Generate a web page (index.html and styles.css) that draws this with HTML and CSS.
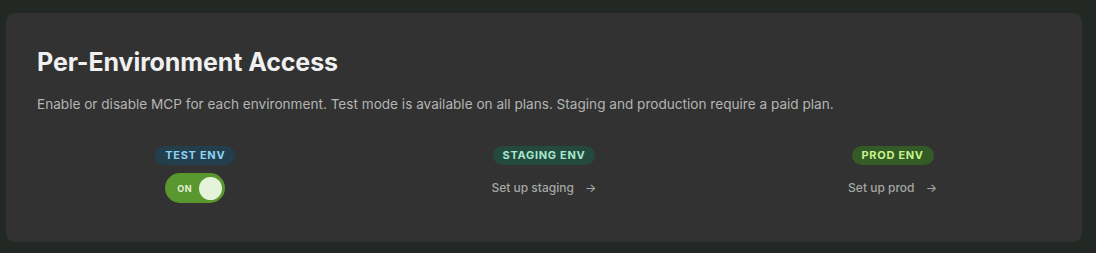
FILE: index.html
```html
<!DOCTYPE html>
<html lang="en">
<head>
    <meta charset="UTF-8">
    <meta name="viewport" content="width=device-width, initial-scale=1.0">
    <title>Per-Environment Access</title>
    <link rel="stylesheet" href="styles.css">
</head>
<body>
    <div class="access-card">
        <div class="access-title">Per-Environment Access</div>
        <div class="access-desc">Enable or disable MCP for each environment. Test mode is available on all plans. Staging and production require a paid plan.</div>
        <div class="env-grid">
            <div class="env-col">
                <span class="env-badge badge-test">TEST ENV</span>
                <div class="toggle on">
                    <span class="toggle-label">ON</span>
                    <span class="toggle-knob"></span>
                </div>
            </div>
            <div class="env-col">
                <span class="env-badge badge-staging">STAGING ENV</span>
                <a class="env-link" href="#">Set up staging <span class="arrow">&rarr;</span></a>
            </div>
            <div class="env-col">
                <span class="env-badge badge-prod">PROD ENV</span>
                <a class="env-link" href="#">Set up prod <span class="arrow">&rarr;</span></a>
            </div>
        </div>
    </div>
</body>
</html>
```

FILE: styles.css
```css
body {
    font-family: Inter, 'Noto Sans', sans-serif;
    background: #232825;
    margin: 0;
    padding: 13px 14px 11px 6px;
}
.access-card {
    background: #313231;
    border-radius: 9px;
    padding: 34px 31px 39px 31px;
}
.access-title {
    font-size: 25px;
    font-weight: 700;
    color: #f0f0f0;
    line-height: 30px;
    letter-spacing: -0.1px;
}
.access-desc {
    font-size: 13.6px;
    color: #b4b5b4;
    margin-top: 17px;
    line-height: 20px;
}
.env-grid {
    display: grid;
    grid-template-columns: repeat(3, 1fr);
    gap: 32px;
    margin-top: 32px;
}
.env-col {
    display: flex;
    flex-direction: column;
    align-items: center;
    gap: 8px;
}
.env-badge {
    font-size: 11px;
    font-weight: 700;
    letter-spacing: 0.7px;
    line-height: 19px;
    padding: 0 10px;
    border-radius: 10px;
}
.badge-test {
    background: #233f4e;
    color: #8ed2f2;
}
.badge-staging {
    background: #244a3f;
    color: #a6e8cc;
}
.badge-prod {
    background: #345a26;
    color: #c4f38a;
}
.toggle {
    width: 60px;
    height: 30px;
    border-radius: 15px;
    box-sizing: border-box;
    padding: 0 3px 0 12px;
    display: flex;
    align-items: center;
    justify-content: space-between;
}
.toggle.on {
    background: #5a972f;
}
.toggle-label {
    font-size: 9px;
    font-weight: 700;
    color: #e4f0dc;
    letter-spacing: 0.4px;
}
.toggle-knob {
    width: 23px;
    height: 23px;
    border-radius: 50%;
    background: #e4f3d9;
}
.env-link {
    font-size: 12px;
    font-weight: 500;
    color: #a6a7a6;
    text-decoration: none;
    line-height: 30px;
}
.arrow {
    margin-left: 8px;
}
```
